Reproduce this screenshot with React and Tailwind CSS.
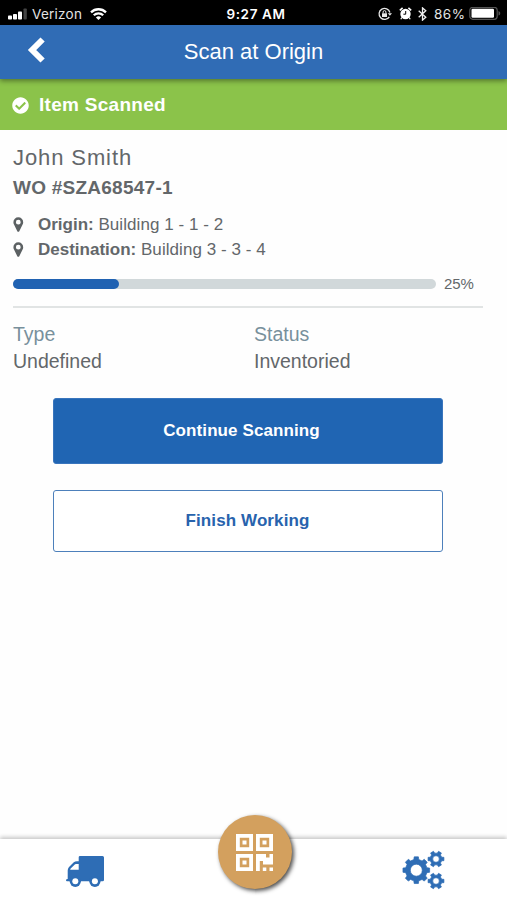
import React from "react";
import { FaCheckCircle } from "react-icons/fa";

function gearPath(cx, cy, root, tip, hole, teeth, offset = 0) {
  const pts = [];
  const step = (Math.PI * 2) / teeth;
  for (let i = 0; i < teeth; i++) {
    const a = i * step + offset;
    [
      [root, -0.29],
      [tip, -0.2],
      [tip, 0.2],
      [root, 0.29],
    ].forEach(([r, f]) => {
      pts.push(`${(cx + r * Math.cos(a + f * step)).toFixed(2)} ${(cy + r * Math.sin(a + f * step)).toFixed(2)}`);
    });
  }
  return `M${pts.join("L")}ZM${cx - hole} ${cy}a${hole} ${hole} 0 1 0 ${hole * 2} 0a${hole} ${hole} 0 1 0 ${-hole * 2} 0Z`;
}

function Gears() {
  return (
    <svg className="ml-[3px] block h-[40px] w-[44px]" viewBox="0 0 44 40" fill="#2e6db5" stroke="#2e6db5" strokeWidth="0.7" strokeLinejoin="round" fillRule="evenodd">
      <path d={gearPath(14.3, 20.2, 10.9, 13.5, 6, 8)} />
      <path d={gearPath(34, 9, 6, 8.1, 3.3, 6)} />
      <path d={gearPath(34, 31, 6, 8.1, 3.3, 6)} />
    </svg>
  );
}

function Truck() {
  return (
    <svg className="block h-[31px] w-[38px]" viewBox="0 0 38 31" fill="#2e6db5">
      <path fillRule="evenodd" d="M14 0H36.500Q38 0 38 1.500V24Q38 25.300 36.500 25.300H1Q0 25.300 0 24.300Q0 23 1.700 23V14.500Q1.700 12.500 3 11L7.500 6.600Q9 5.300 11 5.300H12.700V1.300Q12.700 0 14 0ZM4.200 13.700H12.700V8H9.800Q9.200 8 8.800 8.400L4.700 12.500Q4.200 13 4.200 13.700Z" />
      <circle cx="9.300" cy="25.300" r="5.600" />
      <circle cx="28.900" cy="25.300" r="5.600" />
      <circle cx="9.300" cy="25.300" r="3" fill="#fff" />
      <circle cx="28.900" cy="25.300" r="3" fill="#fff" />
    </svg>
  );
}

function Pin() {
  return (
    <svg className="block h-[15px] w-[11px]" viewBox="0 0 11 15" fill="#5c6163" fillRule="evenodd">
      <path d="M5.300.3a4.900 4.900 0 0 1 4.900 4.900c0 1-.2 1.600-.6 2.400L6.300 14.200a1.100 1.100 0 0 1-2 0L1 7.600C.6 6.800.4 6.200.4 5.200A4.900 4.900 0 0 1 5.300.3ZM5.300 2.800a2.400 2.400 0 1 0 0 4.800 2.400 2.400 0 1 0 0-4.800Z" />
    </svg>
  );
}

function QrCode() {
  return (
    <svg className="block h-[37px] w-[37px]" viewBox="0 0 37 37" fill="#fff" fillRule="evenodd">
      <path d="M0 0h17v17H0zM3.800 3.800v9.400h9.400V3.800zM6.500 6.500h4v4h-4z" />
      <path d="M20 0h17v17H20zM23.800 3.800v9.400h9.400V3.800zM26.500 6.500h4v4h-4z" />
      <path d="M0 20h17v17H0zM3.800 23.800v9.400h9.400V23.800zM6.500 26.500h4v4h-4z" />
      <path d="M20 20h10v3.500h3.500V20H37v10.500H27v-3.500h-3.200v10H20zM26.800 33.500h3.500V37h-3.500zM33.500 33.500H37V37h-3.500z" />
    </svg>
  );
}

function StatusBar() {
  return (
    <div className="grid h-[25px] shrink-0 grid-cols-[1fr_auto_1fr] items-center bg-black font-['Inter','Liberation_Sans',sans-serif] text-[13.5px] leading-4 text-[#e4e4e4]">
      <div className="flex items-center pt-[2px] pl-2">
        <svg className="h-[12px] w-[19px]" viewBox="0 0 19 12" fill="#fff">
          <rect x="0" y="7.500" width="4" height="4" rx="0.800" />
          <rect x="5" y="6" width="4" height="5.500" rx="0.800" />
          <rect x="10" y="3.500" width="4" height="8" rx="0.800" />
          <rect x="15.500" y="0.500" width="3.300" height="11" rx="0.800" fill="#444" />
        </svg>
        <span className="ml-[5px] w-[51px] tracking-[0.25px]">Verizon</span>
        <svg className="ml-[7px] h-[12px] w-[17px]" viewBox="0 0 17 12" fill="none" stroke="#fff" strokeWidth="2.300">
          <path d="M1 4.300a10.800 10.800 0 0 1 15 0" />
          <path d="M3.800 7.300a6.700 6.700 0 0 1 9.400 0" />
          <path d="M8.500 12L5.900 9.400a3.800 3.800 0 0 1 5.200 0z" fill="#fff" stroke="none" />
        </svg>
      </div>
      <div className="pt-[3px] pl-[5px] font-semibold tracking-[0.6px] whitespace-nowrap text-white">9:27 AM</div>
      <div className="flex items-center justify-end pt-[2px] pr-[6px]">
        <svg className="h-[14px] w-[14px]" viewBox="0 0 14 14" fill="none" stroke="#e8e8e8" strokeWidth="1.300">
          <path d="M11.300 9.800A5.500 5.500 0 1 1 11.900 5.500" />
          <path d="M9.800 6.200h4.200l-2.100 2.500z" fill="#e8e8e8" stroke="none" />
          <path d="M4 6.300h5v3.700H4z" fill="#e8e8e8" stroke="none" />
          <path d="M5.100 6.500V5a1.400 1.400 0 0 1 2.800 0v1.500" strokeWidth="1" />
        </svg>
        <svg className="ml-[7px] h-[13px] w-[13px]" viewBox="0 0 13 13" fill="none" stroke="#fff">
          <circle cx="6.500" cy="7" r="5.200" fill="#fff" stroke="none" />
          <path d="M.8 3.300L3.600.9M12.200 3.300L9.400.9" strokeWidth="1.600" />
          <path d="M2.800 10.500l-1 1.700M10.200 10.500l1 1.700" strokeWidth="1.200" />
          <path d="M6.700 4v3.200H4.400" stroke="#000" strokeWidth="1" />
        </svg>
        <svg className="ml-[6px] h-[14px] w-[9px]" viewBox="0 0 9 14" fill="none" stroke="#eee" strokeWidth="1.300">
          <path d="M.7 3.700l7.100 6.500L4.500 13.100V.9l3.300 2.900L.7 10.300" />
        </svg>
        <span className="ml-[7px] w-[32px] tracking-[0.5px]">86%</span>
        <svg className="ml-[3px] h-[14px] w-[32px]" viewBox="0 0 32 14" fill="none">
          <rect x="0.800" y="0.300" width="27.400" height="12" rx="3" stroke="#555" strokeWidth="1.200" />
          <rect x="2.500" y="1.800" width="22.500" height="9" rx="1.200" fill="#fff" />
          <path d="M29.500 4c2.300.8 2.300 3.800 0 4.600z" fill="#555" />
        </svg>
      </div>
    </div>
  );
}

function Place({ label, children }) {
  return (
    <div className="flex h-[25px] items-center text-[17px] leading-[25px]">
      <Pin />
      <p className="ml-[14px] whitespace-nowrap"><b>{label}</b> <span className="tracking-[0.06px]">{children}</span></p>
    </div>
  );
}

export default function App() {
  return (
    <div className="flex h-[900px] w-[507px] flex-col overflow-hidden bg-[#fefefe] font-['Liberation_Sans',Arial,sans-serif] text-[#63676a]">
      <StatusBar />
      <header className="z-10 grid h-[54px] shrink-0 grid-cols-[1fr_auto_1fr] items-center bg-[#306cb5] text-white shadow-[0_2px_5px_rgba(0,0,0,0.4)]">
        <svg className="mb-[4px] ml-[27px] h-[26px] w-[19px]" viewBox="0 0 19 26" fill="none" stroke="#fff" strokeWidth="6">
          <path d="M15.600 2.500L5.100 13L15.600 23.500" />
        </svg>
        <h1 className="text-[22px] leading-6 whitespace-nowrap">Scan at Origin</h1>
      </header>
      <div className="flex h-[51px] shrink-0 items-center bg-[#8bc34a] pt-px pl-3 text-white">
        <FaCheckCircle className="h-[17px] w-[17px]" />
        <b className="ml-[10px] text-[19px] leading-6 tracking-[0.28px]">Item Scanned</b>
      </div>

      <main className="flex flex-1 flex-col pl-[13px]">
        <h2 className="mt-[14px] text-[22px] leading-[27px] tracking-[0.9px]">John Smith</h2>
        <b className="mt-[3px] text-[19px] leading-[27px] tracking-[0.25px]">WO #SZA68547-1</b>
        <div className="mt-[11px]">
          <Place label="Origin:">Building 1 - 1 - 2</Place>
          <Place label="Destination:">Building 3 - 3 - 4</Place>
        </div>
        <div className="mt-[12px] flex h-[20px] items-center">
          <div className="h-[10px] w-[423px] rounded-full bg-[#d1d8da]">
            <div className="h-full w-1/4 rounded-full bg-[#2062b2]" />
          </div>
          <span className="ml-[8px] text-[15px] tracking-[-0.1px]">25%</span>
        </div>
        <hr className="mt-[12px] w-[470px] border-t-2 border-[#e1e4e4]" />
        <dl className="mt-[13px] grid grid-cols-[241px_1fr] text-[19.5px] leading-[27px]">
          <div>
            <dt className="text-[#78909c]">Type</dt>
            <dd>Undefined</dd>
          </div>
          <div>
            <dt className="text-[#78909c]">Status</dt>
            <dd>Inventoried</dd>
          </div>
        </dl>
        <button className="mt-[23px] ml-[40px] h-[66px] w-[390px] rounded-[3px] border border-[#3975bd] bg-[#2065b3] pr-[13px] text-[17px] font-bold tracking-[0.1px] text-white">Continue Scanning</button>
        <button className="mt-[26px] ml-[40px] h-[62px] w-[390px] rounded-[3px] border-[1.5px] border-[#4d80bb] bg-white pr-px text-[17px] font-bold tracking-[0.1px] text-[#2863ad]">Finish Working</button>
      </main>

      <nav className="grid h-[61px] shrink-0 grid-cols-3 bg-white shadow-[0_-2px_4px_rgba(0,0,0,0.22)]">
        <button className="flex items-start justify-center pt-[17px]" aria-label="Deliveries"><Truck /></button>
        <button className="mx-auto -mt-[24px] flex h-[74px] w-[74px] translate-x-[1px] items-center justify-center rounded-full bg-[#d3a05e] shadow-[2px_2px_4px_rgba(0,0,0,0.7)]" aria-label="Scan"><QrCode /></button>
        <button className="flex items-start justify-center pt-[11px]" aria-label="Settings"><Gears /></button>
      </nav>
    </div>
  );
}
